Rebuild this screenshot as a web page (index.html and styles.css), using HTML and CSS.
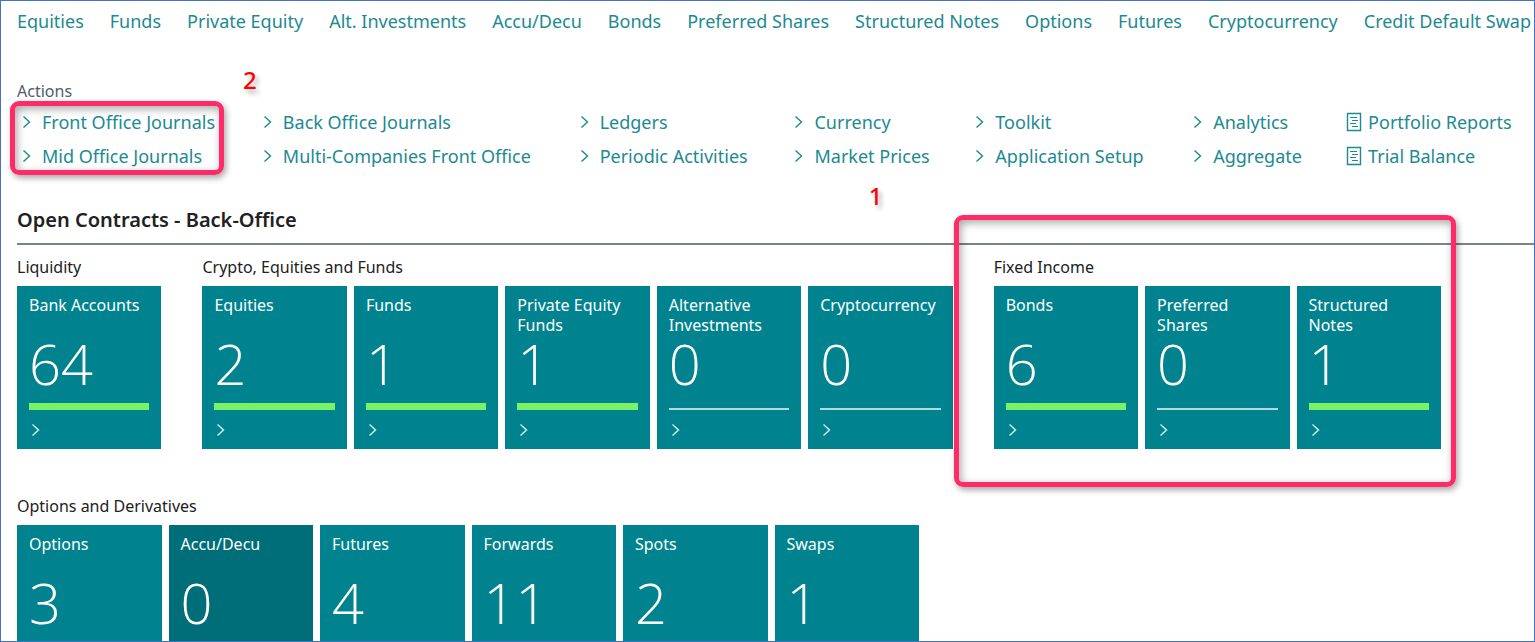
FILE: index.html
```html
<!DOCTYPE html>
<html lang="en">
<head>
<meta charset="utf-8">
<title>Role Center</title>
<link rel="stylesheet" href="styles.css">
</head>
<body>
<svg class="sprite" aria-hidden="true">
  <symbol id="chevron" viewBox="0 0 10 14"><path d="M1.5 1.5 7.5 7 1.5 12.5" fill="none" stroke="currentColor" stroke-width="1.4"/></symbol>
  <symbol id="report" viewBox="0 0 16 20"><path d="M1.5 1.5H14.5V18.5H1.5Z" fill="none" stroke="currentColor" stroke-width="1.4"/><path d="M4 5.5H11M6 8.5H12M4 11.5H10M6 14.5H12" fill="none" stroke="currentColor"/></symbol>
</svg>
<div class="page">
  <nav class="nav">
    <a href="#">Equities</a><a href="#">Funds</a><a href="#">Private Equity</a><a href="#">Alt. Investments</a><a href="#">Accu/Decu</a><a href="#">Bonds</a><a href="#">Preferred Shares</a><a href="#">Structured Notes</a><a href="#">Options</a><a href="#">Futures</a><a href="#">Cryptocurrency</a><a href="#">Credit Default Swap</a>
  </nav>

  <section class="actions">
    <h2 class="actions-title">Actions</h2>
    <div class="actions-grid">
      <button class="action"><svg class="chev"><use href="#chevron"/></svg>Front Office Journals</button>
      <button class="action"><svg class="chev"><use href="#chevron"/></svg>Back Office Journals</button>
      <button class="action"><svg class="chev"><use href="#chevron"/></svg>Ledgers</button>
      <button class="action"><svg class="chev"><use href="#chevron"/></svg>Currency</button>
      <button class="action"><svg class="chev"><use href="#chevron"/></svg>Toolkit</button>
      <button class="action"><svg class="chev"><use href="#chevron"/></svg>Analytics</button>
      <a class="action report" href="#"><svg class="doc"><use href="#report"/></svg>Portfolio Reports</a>
      <button class="action"><svg class="chev"><use href="#chevron"/></svg>Mid Office Journals</button>
      <button class="action"><svg class="chev"><use href="#chevron"/></svg>Multi-Companies Front Office</button>
      <button class="action"><svg class="chev"><use href="#chevron"/></svg>Periodic Activities</button>
      <button class="action"><svg class="chev"><use href="#chevron"/></svg>Market Prices</button>
      <button class="action"><svg class="chev"><use href="#chevron"/></svg>Application Setup</button>
      <button class="action"><svg class="chev"><use href="#chevron"/></svg>Aggregate</button>
      <a class="action report" href="#"><svg class="doc"><use href="#report"/></svg>Trial Balance</a>
    </div>
    <div class="mark mark-journals"></div>
    <span class="step step-two">2</span>
  </section>

  <section class="contracts">
    <h1 class="contracts-title">Open Contracts - Back-Office</h1>
    <div class="groups">
      <div class="group one">
        <h3>Liquidity</h3>
        <div class="tiles">
          <a class="tile" href="#"><span class="name">Bank Accounts</span><span class="count">64</span><span class="bar good"></span><svg class="go"><use href="#chevron"/></svg></a>
        </div>
      </div>
      <div class="group five">
        <h3>Crypto, Equities and Funds</h3>
        <div class="tiles">
          <a class="tile" href="#"><span class="name">Equities</span><span class="count">2</span><span class="bar good"></span><svg class="go"><use href="#chevron"/></svg></a>
          <a class="tile" href="#"><span class="name">Funds</span><span class="count">1</span><span class="bar good"></span><svg class="go"><use href="#chevron"/></svg></a>
          <a class="tile" href="#"><span class="name">Private Equity Funds</span><span class="count">1</span><span class="bar good"></span><svg class="go"><use href="#chevron"/></svg></a>
          <a class="tile" href="#"><span class="name">Alternative Investments</span><span class="count">0</span><span class="bar"></span><svg class="go"><use href="#chevron"/></svg></a>
          <a class="tile" href="#"><span class="name">Cryptocurrency</span><span class="count">0</span><span class="bar"></span><svg class="go"><use href="#chevron"/></svg></a>
        </div>
      </div>
      <div class="group three">
        <h3>Fixed Income</h3>
        <div class="tiles">
          <a class="tile" href="#"><span class="name">Bonds</span><span class="count">6</span><span class="bar good"></span><svg class="go"><use href="#chevron"/></svg></a>
          <a class="tile" href="#"><span class="name">Preferred Shares</span><span class="count">0</span><span class="bar"></span><svg class="go"><use href="#chevron"/></svg></a>
          <a class="tile" href="#"><span class="name">Structured Notes</span><span class="count">1</span><span class="bar good"></span><svg class="go"><use href="#chevron"/></svg></a>
        </div>
        <div class="mark mark-income"></div>
        <span class="step step-one">1</span>
      </div>
    </div>
    <div class="groups">
      <div class="group derivatives">
        <h3>Options and Derivatives</h3>
        <div class="tiles">
          <a class="tile" href="#"><span class="name">Options</span><span class="count">3</span><span class="bar good"></span><svg class="go"><use href="#chevron"/></svg></a>
          <a class="tile active" href="#"><span class="name">Accu/Decu</span><span class="count">0</span><span class="bar"></span><svg class="go"><use href="#chevron"/></svg></a>
          <a class="tile" href="#"><span class="name">Futures</span><span class="count">4</span><span class="bar good"></span><svg class="go"><use href="#chevron"/></svg></a>
          <a class="tile" href="#"><span class="name">Forwards</span><span class="count">11</span><span class="bar good"></span><svg class="go"><use href="#chevron"/></svg></a>
          <a class="tile" href="#"><span class="name">Spots</span><span class="count">2</span><span class="bar good"></span><svg class="go"><use href="#chevron"/></svg></a>
          <a class="tile" href="#"><span class="name">Swaps</span><span class="count">1</span><span class="bar good"></span><svg class="go"><use href="#chevron"/></svg></a>
        </div>
      </div>
    </div>
  </section>
</div>
</body>
</html>
```
FILE: styles.css
```css
* { box-sizing: border-box; }
body { margin: 0; background: #fff; color: #212121; font-family: "Noto Sans", "Open Sans", sans-serif; }
h1, h2, h3 { margin: 0; }
a { text-decoration: none; }
.sprite { position: absolute; width: 0; height: 0; }

.page { height: 100vh; overflow: hidden; border: 1px solid #4472c4; padding: 8px 0 0 16px; }

.nav { display: flex; justify-content: space-between; padding-right: 3px; }
.nav a { color: #1b8a91; font-size: 18px; line-height: 24px; white-space: nowrap; }

.actions { position: relative; margin-top: 46px; }
.actions-title { font-size: 16px; line-height: 24px; font-weight: 400; color: #505c6d; }
.actions-grid {
  display: grid;
  grid-template-columns: 241fr 317fr 215fr 181fr 218fr 153fr 188fr;
  row-gap: 10px;
  padding: 7px 0 0 5px;
}
.action {
  display: flex; align-items: center; gap: 10px;
  margin: 0; padding: 0; border: 0; background: none;
  color: #1b8a91; font-family: inherit; font-size: 18px; line-height: 24px;
  white-space: nowrap; cursor: pointer;
}
.report { gap: 6px; }
.chev { width: 10px; height: 14px; }
.doc { width: 16px; height: 20px; }

.contracts { margin-top: 36px; }
.contracts-title {
  font-size: 20px; line-height: 32px; font-weight: 600;
  padding-bottom: 7px; border-bottom: 2px solid #7a8290;
}
.groups { display: flex; gap: 41px; padding: 10px 93px 35px 0; }
.group { position: relative; min-width: 0; }
.one { flex: 1 1 0; }
.five { flex: 5 1 28px; }
.three { flex: 3 1 14px; }
.derivatives { flex: 0 1 902px; }
.group h3 { font-size: 16px; line-height: 24px; font-weight: 400; white-space: nowrap; }
.tiles { display: grid; grid-auto-flow: column; grid-auto-columns: minmax(0, 1fr); gap: 7px; margin-top: 7px; }
.tile {
  display: flex; flex-direction: column;
  height: 163px; padding: 9px 12px 12px;
  background: #00838f; color: #fff;
}
.active { background: #006e78; }
.name { height: 40px; font-size: 16px; line-height: 20px; }
.count { font-family: "Open Sans", "Noto Sans", sans-serif; font-size: 56px; line-height: 56px; font-weight: 300; }
.bar { height: 7px; margin-top: 12px; border-bottom: 2px solid #b2dade; }
.good { border: 0; background: #7bf266; }
.go { width: 10px; height: 14px; margin: 13px 0 0 2px; color: #d6ecee; }

.mark {
  position: absolute; pointer-events: none;
  border: 5px solid #ff2a68; border-radius: 9px;
  box-shadow: 2px 3px 6px rgba(0, 0, 0, .35), inset 2px 3px 8px rgba(0, 0, 0, .35);
}
.mark-journals { left: -7px; top: 22px; width: 214px; height: 74px; }
.mark-income { left: -40px; top: -40px; width: 502px; height: 272px; }
.step {
  position: absolute; color: #f00; font-family: "Noto Sans", sans-serif;
  font-size: 24px; line-height: 32px; font-weight: 500; text-shadow: 3px 4px 5px rgba(0, 0, 0, .3);
}
.step-two { left: 226px; top: -15px; }
.step-one { left: -125px; top: -75px; }
```
